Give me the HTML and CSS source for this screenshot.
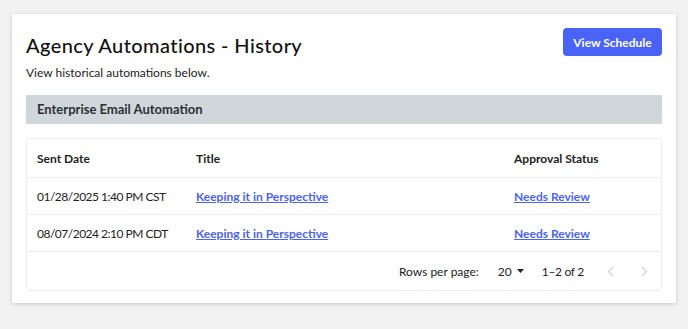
FILE: index.html
```html
<!DOCTYPE html>
<html lang="en">
<head>
    <meta charset="UTF-8">
    <meta name="viewport" content="width=device-width, initial-scale=1.0">
    <title>Agency Automations - History</title>
    <link rel="stylesheet" href="styles.css">
</head>
<body>
    <div class="card">
        <div class="page-header">
            <div>
                <h1>Agency Automations - History</h1>
                <p class="subtitle">View historical automations below.</p>
            </div>
            <button class="btn-primary">View Schedule</button>
        </div>
        <div class="section-bar">Enterprise Email Automation</div>
        <div class="table">
            <div class="row head">
                <div class="cell">Sent Date</div>
                <div class="cell">Title</div>
                <div class="cell">Approval Status</div>
            </div>
            <div class="row">
                <div class="cell date">01/28/2025 1:40 PM CST</div>
                <div class="cell"><a href="#">Keeping it in Perspective</a></div>
                <div class="cell"><a href="#">Needs Review</a></div>
            </div>
            <div class="row">
                <div class="cell date">08/07/2024 2:10 PM CDT</div>
                <div class="cell"><a href="#">Keeping it in Perspective</a></div>
                <div class="cell"><a href="#">Needs Review</a></div>
            </div>
            <div class="table-footer">
                <span class="rows-label">Rows per page:</span>
                <span class="rows-select">20
                    <svg width="7" height="4" viewBox="0 0 7 4"><path d="M0 0h7L3.5 4z" fill="#222"/></svg>
                </span>
                <span class="range">1–2 of 2</span>
                <span class="pager prev">
                    <svg width="7" height="11" viewBox="0 0 7 11"><path d="M6 1L1.5 5.5 6 10" fill="none" stroke="#d4d4d4" stroke-width="1.3"/></svg>
                </span>
                <span class="pager next">
                    <svg width="7" height="11" viewBox="0 0 7 11"><path d="M1 1l4.5 4.5L1 10" fill="none" stroke="#d4d4d4" stroke-width="1.3"/></svg>
                </span>
            </div>
        </div>
    </div>
</body>
</html>
```

FILE: styles.css
```css
body {
    margin: 0;
    padding: 14px 12px;
    background-color: #f2f2f2;
    font-family: Lato, "Open Sans", sans-serif;
    color: #222;
}
.card {
    width: 664px;
    height: 289px;
    box-sizing: border-box;
    padding: 14px;
    background-color: #fff;
    border-radius: 2px;
    box-shadow: 0 1px 4px rgba(0, 0, 0, 0.18);
}
.page-header {
    display: flex;
    justify-content: space-between;
    align-items: flex-start;
}
h1 {
    margin: 5px 0 0;
    font-size: 20px;
    line-height: 24px;
    font-weight: 500;
    letter-spacing: 0.4px;
    color: #111;
}
.subtitle {
    margin: 8px 0 0;
    font-size: 12px;
    line-height: 16px;
}
.btn-primary {
    width: 99px;
    height: 28px;
    border: none;
    border-radius: 4px;
    background-color: #4a63f7;
    color: #fff;
    font-family: inherit;
    font-size: 12px;
    font-weight: 700;
    cursor: pointer;
}
.section-bar {
    margin-top: 14px;
    height: 29px;
    padding: 0 11px;
    background-color: #d0d7db;
    font-size: 13px;
    font-weight: 700;
    line-height: 29px;
    color: #2a2f35;
}
.table {
    margin-top: 14px;
    border: 1px solid #ececec;
    border-radius: 4px;
    font-size: 12px;
}
.row {
    display: grid;
    grid-template-columns: 159px 318px 1fr;
    height: 36px;
    align-items: center;
    border-bottom: 1px solid #ececec;
}
.row.head {
    height: 38px;
    font-weight: 700;
}
.cell {
    padding: 0 10px;
    white-space: nowrap;
}
.cell.date {
    letter-spacing: -0.5px;
}
.cell a {
    color: #4a63f7;
    font-weight: 700;
}
.table-footer {
    display: flex;
    justify-content: flex-end;
    align-items: center;
    height: 38px;
    padding-right: 13px;
}
.rows-select {
    display: flex;
    align-items: center;
    gap: 5px;
    margin-left: 19px;
}
.range {
    margin-left: 18px;
    letter-spacing: -0.3px;
}
.pager {
    display: flex;
}
.pager.prev {
    margin-left: 23px;
}
.pager.next {
    margin-left: 27px;
}
```
